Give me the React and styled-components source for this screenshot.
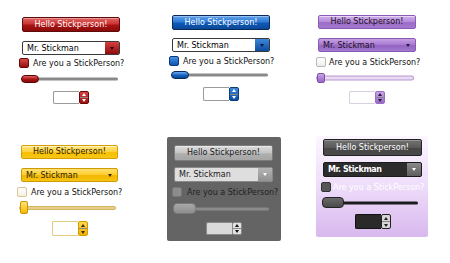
import React from 'react';
import styled, { createGlobalStyle, ThemeProvider } from 'styled-components';

const Global = createGlobalStyle`
  html, body { margin: 0; padding: 0; background: #fff; }
  body { font-family: "DejaVu Sans", Verdana, sans-serif; }
  * { box-sizing: border-box; }
`;

const Grid = styled.div`
  display: grid;
  grid-template-columns: repeat(3, 150px);
  grid-template-rows: 130px 133px;
  width: 450px;
  height: 263px;
`;

const Cell = styled.div`
  display: flex;
  align-items: flex-start;
  padding: ${(p) => p.theme.cellPad};
`;

const Panel = styled.div`
  display: flex;
  flex-direction: column;
  width: ${(p) => p.theme.panelW}px;
  height: ${(p) => p.theme.panelH};
  padding: ${(p) => p.theme.panelPad};
  background: ${(p) => p.theme.panelBg};
  border-radius: 2px;
`;

const Button = styled.div`
  height: ${(p) => p.theme.btnH}px;
  border: 1px solid ${(p) => p.theme.btnBorder};
  border-radius: 2px;
  background: ${(p) => p.theme.btnBg};
  color: ${(p) => p.theme.btnColor};
  font-size: 8px;
  line-height: 1;
  display: flex;
  align-items: center;
  justify-content: center;
  box-shadow: ${(p) => p.theme.btnShadow};
  white-space: nowrap;
`;

const Combo = styled.div`
  display: flex;
  margin-top: ${(p) => p.theme.comboMt}px;
  height: ${(p) => p.theme.comboH}px;
  border: 1px solid ${(p) => p.theme.comboBorder};
  border-radius: 2px;
  background: ${(p) => p.theme.comboBg};
  overflow: hidden;
`;

const ComboText = styled.span`
  flex: 1;
  display: flex;
  align-items: center;
  padding-left: 4px;
  font-size: 8px;
  font-weight: ${(p) => p.theme.comboWeight};
  letter-spacing: ${(p) => p.theme.comboSpacing};
  color: ${(p) => p.theme.comboColor};
  white-space: nowrap;
`;

const ComboArrow = styled.span`
  width: 14px;
  display: flex;
  align-items: center;
  justify-content: center;
  background: ${(p) => p.theme.arrowBg};
`;

const TriDown = styled.i`
  width: 0;
  height: 0;
  border-left: 2.5px solid transparent;
  border-right: 2.5px solid transparent;
  border-top: 3px solid ${(p) => p.$color};
`;

const TriUp = styled.i`
  width: 0;
  height: 0;
  border-left: 2.5px solid transparent;
  border-right: 2.5px solid transparent;
  border-bottom: 3px solid ${(p) => p.$color};
`;

const CheckRow = styled.label`
  display: flex;
  align-items: center;
  margin-top: ${(p) => p.theme.checkMt}px;
  margin-left: ${(p) => p.theme.checkMl}px;
  gap: ${(p) => p.theme.checkGap}px;
  white-space: nowrap;
  height: 10px;
`;

const CheckBox = styled.span`
  width: 10px;
  height: 10px;
  flex: none;
  border: 1px solid ${(p) => p.theme.checkBorder};
  border-radius: 2px;
  background: ${(p) => p.theme.checkBg};
`;

const CheckLabel = styled.span`
  font-size: 8px;
  color: ${(p) => p.theme.labelColor};
`;

const Slider = styled.div`
  position: relative;
  display: flex;
  align-items: center;
  margin-top: ${(p) => p.theme.sliderMt}px;
  margin-left: -1px;
  width: ${(p) => p.theme.sliderW}px;
  height: ${(p) => p.theme.thumbH}px;
`;

const Track = styled.span`
  position: absolute;
  left: 0;
  right: 0;
  top: 50%;
  height: ${(p) => p.theme.trackH}px;
  transform: translateY(-50%);
  background: ${(p) => p.theme.trackBg};
  border-radius: 2px;
  box-shadow: ${(p) => p.theme.trackShadow};
`;

const Thumb = styled.span`
  position: relative;
  z-index: 1;
  width: ${(p) => p.theme.thumbW}px;
  height: ${(p) => p.theme.thumbH}px;
  border: 1px solid ${(p) => p.theme.thumbBorder};
  border-radius: ${(p) => p.theme.thumbR}px;
  background: ${(p) => p.theme.thumbBg};
`;

const Numeric = styled.div`
  display: flex;
  align-self: center;
  margin-top: ${(p) => p.theme.numMt}px;
  height: ${(p) => p.theme.numH}px;
`;

const NumBox = styled.span`
  width: 26px;
  height: 100%;
  border: 1px solid ${(p) => p.theme.numBorder};
  border-right: none;
  background: ${(p) => p.theme.numBg};
  border-radius: 2px 0 0 2px;
`;

const Spinner = styled.span`
  width: 10px;
  height: 100%;
  display: flex;
  flex-direction: column;
  border-radius: 2px;
  overflow: hidden;
  border: 1px solid ${(p) => p.theme.spinBorder};
  background: ${(p) => p.theme.spinBg};
`;

const SpinHalf = styled.span`
  flex: 1;
  display: flex;
  align-items: center;
  justify-content: center;
  & + & {
    border-top: 1px solid ${(p) => p.theme.spinSep};
  }
`;

const base = {
  cellPad: '0',
  panelW: 98,
  panelH: 'auto',
  panelBg: 'transparent',
  btnShadow: 'inset 0 1px 0 rgba(255,255,255,0.35)',
  comboWeight: 'normal',
  comboSpacing: 'normal',
  sliderW: 97,
  spinSep: 'transparent',
};

const red = {
  ...base,
  cellPad: '17px 0 0 22px',
  btnH: 15,
  btnBorder: '#5c0a0a',
  btnBg: 'linear-gradient(#e06464 0%, #cc3434 45%, #a81414 55%, #8c0a0a 100%)',
  btnColor: '#fff',
  comboMt: 9,
  comboH: 14,
  comboBorder: '#3a3a3a',
  comboBg: '#fff',
  comboColor: '#000',
  arrowBg: 'linear-gradient(#d44040, #8e0c0c)',
  arrowColor: '#300',
  checkMt: 3,
  checkMl: -3,
  checkGap: 4,
  checkBorder: '#6a0808',
  checkBg: 'linear-gradient(#d64848, #951010)',
  labelColor: '#111',
  sliderMt: 7,
  trackH: 3,
  trackBg: '#8a8a8a',
  trackShadow: 'none',
  thumbW: 18,
  thumbH: 8,
  thumbR: 4,
  thumbBorder: '#5a0606',
  thumbBg: 'linear-gradient(#e06060, #a81414 55%, #8a0a0a)',
  numMt: 8,
  numH: 13,
  numBorder: '#9a9a9a',
  numBg: '#fff',
  spinBorder: '#6a0808',
  spinBg: 'linear-gradient(#d84444, #9a1010)',
  spinArrow: '#fff',
  spinSep: '#f0c0c0',
};

const blue = {
  ...red,
  cellPad: '15px 0 0 22px',
  btnBorder: '#0a2a5a',
  btnBg: 'linear-gradient(#5ea2ea 0%, #2f7ad6 45%, #0f5ab8 55%, #0a4796 100%)',
  comboMt: 8,
  arrowBg: 'linear-gradient(#3c88dc, #0b4c9e)',
  arrowColor: '#031a3a',
  checkMt: 4,
  checkBorder: '#0a3a7a',
  checkBg: 'linear-gradient(#4a92e2, #0d56ae)',
  sliderMt: 5,
  thumbBorder: '#062a5c',
  thumbBg: 'linear-gradient(#6aaaf0, #1660be 55%, #0a4690)',
  numMt: 8,
  numH: 14,
  spinBorder: '#0a3a7a',
  spinBg: 'linear-gradient(#3e8ae0, #0b4ea2)',
  spinSep: '#c0d8f4',
};

const purple = {
  ...base,
  cellPad: '15px 0 0 18px',
  btnH: 14,
  btnBorder: '#8a5ab6',
  btnBg: 'linear-gradient(#d2b0ec 0%, #b488d8 50%, #9d6cc6 55%, #a47ad0 100%)',
  btnColor: '#1a1020',
  btnShadow: 'inset 0 1px 0 rgba(255,255,255,0.5)',
  comboMt: 9,
  comboH: 14,
  comboBorder: '#8a5ab6',
  comboBg: 'linear-gradient(#c6a0e4 0%, #a678d0 50%, #9463c2 55%, #a07ace 100%)',
  comboColor: '#1a1020',
  arrowBg: 'transparent',
  arrowColor: '#2a1a3a',
  checkMt: 5,
  checkMl: -2,
  checkGap: 3,
  checkBorder: '#b8b8b8',
  checkBg: 'linear-gradient(#fff, #eee)',
  labelColor: '#111',
  sliderMt: 6,
  sliderW: 96,
  trackH: 3,
  trackBg: '#e8daf2',
  trackShadow: '0 0 0 1px #b998d2',
  thumbW: 8,
  thumbH: 10,
  thumbR: 2,
  thumbBorder: '#7e52a8',
  thumbBg: 'linear-gradient(#c8a2e6, #9a66c8)',
  numMt: 8,
  numH: 13,
  numBorder: '#d8d0e0',
  numBg: '#fff',
  spinBorder: '#9a6cc4',
  spinBg: 'linear-gradient(#c8a4e6, #9a68c8)',
  spinArrow: '#2a1a3a',
  spinSep: 'transparent',
};

const yellow = {
  ...purple,
  cellPad: '15px 0 0 21px',
  panelW: 97,
  btnBorder: '#d6a000',
  btnBg: 'linear-gradient(#ffe680 0%, #ffd23a 50%, #f6be00 55%, #f8c818 100%)',
  btnColor: '#2a2000',
  comboMt: 9,
  comboBorder: '#d09a00',
  comboBg: 'linear-gradient(#ffe070 0%, #ffcc2a 50%, #f2b600 55%, #f6c414 100%)',
  comboColor: '#2a2000',
  arrowColor: '#3a2c00',
  checkMt: 5,
  checkMl: -4,
  checkGap: 4,
  checkBorder: '#d8c490',
  checkBg: 'linear-gradient(#fff, #f4f0e4)',
  sliderMt: 4,
  sliderW: 95,
  trackH: 2,
  trackBg: '#e6cf8a',
  trackShadow: '0 0 0 1px #d4b45c',
  thumbW: 8,
  thumbH: 13,
  thumbR: 2,
  thumbBorder: '#c89400',
  thumbBg: 'linear-gradient(#ffe27a, #f4b800)',
  numMt: 7,
  numH: 15,
  numBorder: '#e4cc7c',
  spinBorder: '#d09a00',
  spinBg: 'linear-gradient(#ffd84a, #f0b400)',
  spinArrow: '#3a2c00',
};

const gray = {
  ...base,
  cellPad: '7px 0 0 17px',
  panelW: 114,
  panelH: '104px',
  panelPad: '8px 8px 0 7px',
  panelBg: '#646464',
  btnH: 16,
  btnBorder: '#7c7c7c',
  btnBg: 'linear-gradient(#dcdcdc 0%, #c4c4c4 50%, #b0b0b0 55%, #a6a6a6 100%)',
  btnColor: '#1a1a1a',
  btnShadow: 'inset 0 1px 0 rgba(255,255,255,0.4)',
  comboMt: 6,
  comboH: 15,
  comboBorder: '#8a8a8a',
  comboBg: '#dedede',
  comboColor: '#1a1a1a',
  arrowBg: 'linear-gradient(#b4b4b4, #929292)',
  arrowColor: '#fff',
  checkMt: 5,
  checkMl: -2,
  checkGap: 5,
  checkBorder: '#777',
  checkBg: '#8c8c8c',
  labelColor: '#222',
  sliderMt: 6,
  sliderW: 96,
  trackH: 3,
  trackBg: '#8a8a8a',
  trackShadow: 'none',
  thumbW: 23,
  thumbH: 11,
  thumbR: 4,
  thumbBorder: '#7a7a7a',
  thumbBg: 'linear-gradient(#a8a8a8, #8e8e8e)',
  numMt: 8,
  numH: 13,
  numBorder: '#8a8a8a',
  numBg: '#dadada',
  spinBorder: '#8a8a8a',
  spinBg: '#e2e2e2',
  spinArrow: '#111',
  spinSep: '#9a9a9a',
};

const lavender = {
  ...base,
  cellPad: '6px 0 0 16px',
  panelW: 112,
  panelH: '101px',
  panelPad: '3px 6px 0 7px',
  panelBg: 'linear-gradient(#fcf6ff 0%, #eedcfa 50%, #d8b8ee 100%)',
  btnH: 17,
  btnBorder: '#222',
  btnBg: 'linear-gradient(#727272 0%, #5a5a5a 50%, #464646 55%, #4a4a4a 100%)',
  btnColor: '#fff',
  btnShadow: 'inset 0 1px 0 rgba(255,255,255,0.25)',
  comboMt: 6,
  comboH: 15,
  comboBorder: '#1a1a1a',
  comboBg: '#2c2c2c',
  comboColor: '#fff',
  comboWeight: 'bold',
  comboSpacing: '-0.4px',
  arrowBg: 'linear-gradient(#8a8a8a, #5e5e5e)',
  arrowColor: '#fff',
  checkMt: 5,
  checkMl: -2,
  checkGap: 2,
  checkBorder: '#333',
  checkBg: '#565656',
  labelColor: '#fff',
  sliderMt: 5,
  sliderW: 96,
  trackH: 3,
  trackBg: '#1c1c1c',
  trackShadow: 'none',
  thumbW: 22,
  thumbH: 11,
  thumbR: 4,
  thumbBorder: '#222',
  thumbBg: 'linear-gradient(#6a6a6a, #4a4a4a)',
  numMt: 6,
  numH: 15,
  numBorder: '#111',
  numBg: '#2a2a2a',
  spinBorder: '#222',
  spinBg: '#d6d6d6',
  spinArrow: '#222',
  spinSep: '#888',
};

const themes = [red, blue, purple, yellow, gray, lavender];

function ControlSet({ theme }) {
  return (
    <ThemeProvider theme={theme}>
      <Cell>
        <Panel>
          <Button>Hello Stickperson!</Button>
          <Combo>
            <ComboText>Mr. Stickman</ComboText>
            <ComboArrow>
              <TriDown $color={theme.arrowColor} />
            </ComboArrow>
          </Combo>
          <CheckRow>
            <CheckBox />
            <CheckLabel>Are you a StickPerson?</CheckLabel>
          </CheckRow>
          <Slider>
            <Track />
            <Thumb />
          </Slider>
          <Numeric>
            <NumBox />
            <Spinner>
              <SpinHalf>
                <TriUp $color={theme.spinArrow} />
              </SpinHalf>
              <SpinHalf>
                <TriDown $color={theme.spinArrow} />
              </SpinHalf>
            </Spinner>
          </Numeric>
        </Panel>
      </Cell>
    </ThemeProvider>
  );
}

export default function App() {
  return (
    <>
      <Global />
      <Grid>
        {themes.map((t, i) => (
          <ControlSet key={i} theme={t} />
        ))}
      </Grid>
    </>
  );
}
